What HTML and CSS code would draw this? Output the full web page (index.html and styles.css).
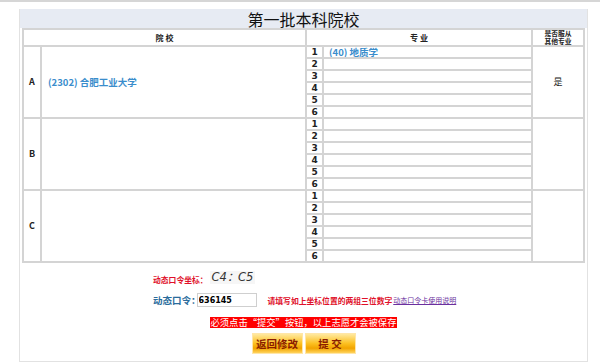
FILE: index.html
```html
<!DOCTYPE html>
<html lang="zh-CN">
<head>
  <meta charset="UTF-8" />
  <title>第一批本科院校</title>
  <link rel="stylesheet" href="styles.css">
</head>
<body>
  <div class="topline"></div>
  <div class="panel">
    <h2 class="panel-title">第一批本科院校</h2>
    <table class="choices">
      <colgroup>
        <col class="c-letter">
        <col class="c-school">
        <col class="c-num">
        <col class="c-major">
        <col class="c-obey">
      </colgroup>
      <thead>
        <tr>
          <th colspan="2">院 校</th>
          <th colspan="2">专 业</th>
          <th class="obey-head"><div>是否服从</div><div>其他专业</div></th>
        </tr>
      </thead>
      <tbody id="rows"></tbody>
    </table>

    <div class="auth">
      <div class="auth-coord">
        <span class="red-label">动态口令坐标：</span>
        <span class="coord">C4：C5</span>
      </div>
      <div class="auth-input">
        <label class="auth-label" for="code">动态口令：</label>
        <input type="text" id="code" class="code-input" value="636145">
        <span class="red-label">请填写如上坐标位置的两组三位数字</span>
        <a href="#" class="help-link">动态口令卡使用说明</a>
      </div>
      <div class="warn">必须点击“提交”按钮，以上志愿才会被保存</div>
      <div class="actions">
        <button class="btn">返回修改</button>
        <button class="btn">提 交</button>
      </div>
    </div>
  </div>

  <script>
    const groups = [
      { letter: 'A', school: '(2302) 合肥工业大学', majors: ['(40) 地质学'], obey: '是' },
      { letter: 'B', school: '', majors: [], obey: '' },
      { letter: 'C', school: '', majors: [], obey: '' }
    ];
    const tbody = document.getElementById('rows');

    groups.forEach(function (g) {
      for (let i = 0; i < 6; i++) {
        const tr = document.createElement('tr');
        if (i === 0) {
          tr.innerHTML =
            '<td rowspan="6" class="letter">' + g.letter + '</td>' +
            '<td rowspan="6" class="school">' + g.school + '</td>';
        }
        tr.innerHTML +=
          '<td class="num">' + (i + 1) + '</td>' +
          '<td class="major">' + (g.majors[i] || '') + '</td>';
        if (i === 0) {
          tr.innerHTML += '<td rowspan="6" class="obey">' + g.obey + '</td>';
        }
        tbody.appendChild(tr);
      }
    });
  </script>
</body>
</html>
```

FILE: styles.css
```css
body {
  margin: 0;
  font-family: "Noto Sans CJK SC", sans-serif;
  font-size: 10px;
  color: #222;
  background: #fff;
}

.topline {
  height: 2px;
  background-color: #d6d6d6;
}

.panel {
  width: 569px;
  margin: 7px 0 0 19px;
  border: 1px solid #e2e2e2;
  border-top: none;
  height: 353px;
  box-sizing: border-box;
  padding: 0 2px;
}

.panel-title {
  margin: 0 -2px;
  height: 19px;
  line-height: 21px;
  background-color: #e7ebf3;
  text-align: center;
  font-size: 16px;
  font-weight: normal;
  color: #111;
}

.choices {
  width: 563px;
  table-layout: fixed;
  border-collapse: separate;
  border-spacing: 0;
  border: 1px solid #d4d4d4;
}

.c-letter { width: 18px; }
.c-school { width: 265px; }
.c-num { width: 17px; }
.c-major { width: 209px; }
.c-obey { width: 52px; }

.choices th,
.choices td {
  border: 1px solid #d4d4d4;
  padding: 0;
  box-sizing: border-box;
  overflow: hidden;
}

.choices th {
  height: 16px;
  font-size: 8px;
  line-height: 8px;
  font-weight: bold;
}

.obey-head div {
  font-size: 6.8px;
  height: 7.5px;
  line-height: 7.5px;
}

.choices td {
  height: 12px;
  line-height: 10px;
}

.letter {
  text-align: center;
  font-weight: bold;
  font-size: 9px;
}

.school {
  padding-left: 6px !important;
  color: #3a8dcc;
  font-weight: bold;
  font-size: 9.5px;
}

.num {
  text-align: center;
  font-weight: bold;
  font-size: 9px;
  font-family: "DejaVu Sans", sans-serif;
}

.major {
  padding-left: 5px !important;
  color: #3a8dcc;
  font-weight: bold;
  font-size: 9.5px;
}

.obey {
  text-align: center;
  font-size: 9px;
}

.auth {
  text-align: center;
  padding-top: 6px;
}

.auth-coord {
  height: 20px;
  display: flex;
  align-items: center;
  padding-left: 131px;
}

.red-label {
  color: #e0102a;
  font-weight: bold;
  font-size: 7.8px;
}

.coord {
  margin-left: 2px;
  padding: 0 2px;
  background-color: #f6f6f6;
  font-family: "DejaVu Sans", sans-serif;
  font-style: italic;
  font-size: 11.5px;
  line-height: 13px;
  color: #333;
  position: relative;
  top: -2px;
}

.auth-input {
  display: flex;
  align-items: center;
  height: 16px;
  margin-top: 3px;
  padding-left: 131px;
}

.auth-label {
  color: #2a6c9c;
  font-weight: bold;
  font-size: 9.5px;
}

.code-input {
  width: 60px;
  height: 14px;
  box-sizing: border-box;
  border: 1px solid #cfcfcf;
  padding: 0 1px;
  font-size: 8px;
  font-weight: bold;
  font-family: "DejaVu Sans", sans-serif;
  margin-left: -4px;
  margin-right: 11px;
}

.help-link {
  color: #6b2f9e;
  font-size: 7px;
  margin-left: 1px;
}

.warn {
  display: inline-block;
  margin-top: 9px;
  padding: 0 1px;
  background-color: #ff0000;
  color: #fff;
  font-size: 9.3px;
  line-height: 11px;
  height: 11px;
  vertical-align: top;
}

.actions {
  display: flex;
  justify-content: center;
  gap: 2px;
  margin-top: 5px;
}

.btn {
  width: 51px;
  height: 21px;
  border: 1px solid #ffe6a8;
  padding: 0;
  background: linear-gradient(#ffe9a0, #fcc021 50%, #f2a400 75%, #ffd35c);
  color: #8a1c00;
  font-family: "Noto Sans CJK SC", sans-serif;
  font-weight: bold;
  font-size: 10.5px;
  cursor: pointer;
}
```
